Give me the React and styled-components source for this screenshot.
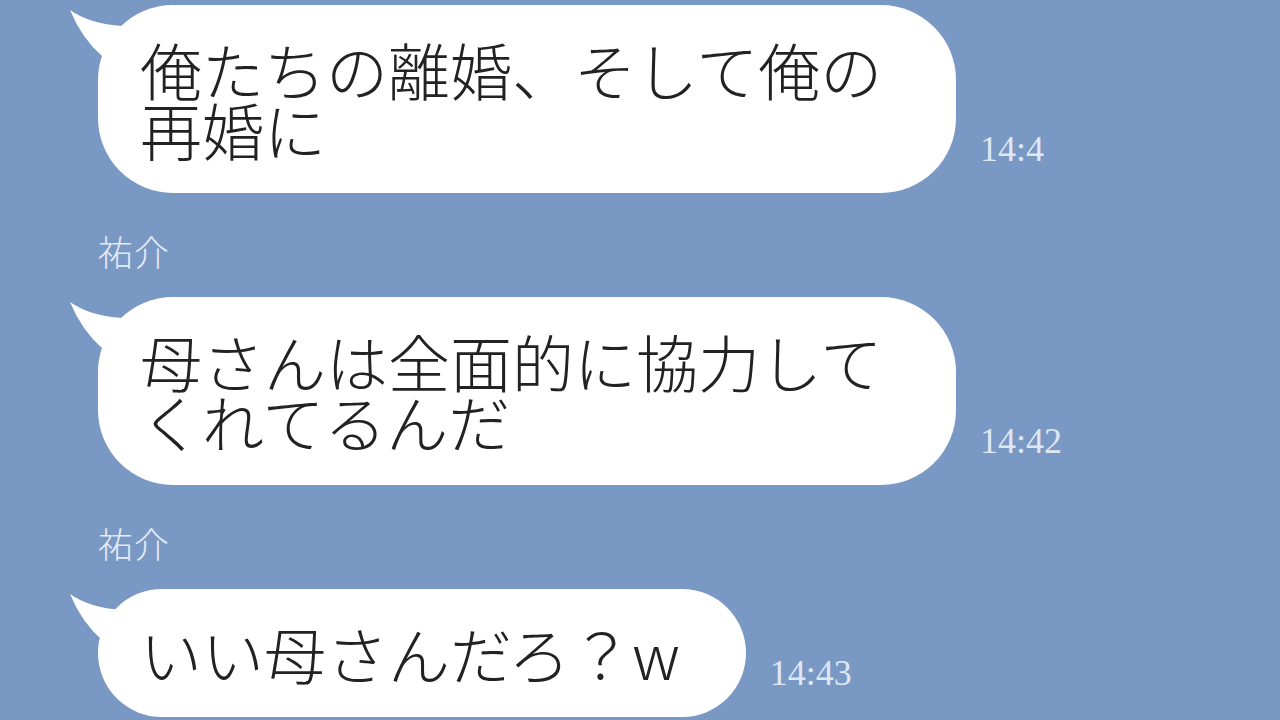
import React from "react";
import styled, { createGlobalStyle } from "styled-components";

const GlobalStyle = createGlobalStyle`
  html, body {
    margin: 0;
    padding: 0;
    background: #7a98c4;
  }
  body {
    width: 1280px;
    height: 720px;
    overflow: hidden;
  }
`;

const Screen = styled.div`
  width: 1280px;
  height: 720px;
  box-sizing: border-box;
  background: #7a98c4;
  padding: 5px 0 0 98px;
  display: flex;
  flex-direction: column;
  gap: 38px;
  overflow: hidden;
`;

const Group = styled.div`
  display: flex;
  flex-direction: column;
  gap: 26px;
`;

const Name = styled.div`
  font-family: "Noto Sans CJK JP", "Noto Sans", sans-serif;
  font-size: 35px;
  font-weight: 300;
  line-height: 40px;
  color: #e4ebf6;
  letter-spacing: 1px;
`;

const Row = styled.div`
  display: flex;
  align-items: flex-end;
  gap: 24px;
`;

const Bubble = styled.div`
  position: relative;
  background: #ffffff;
  border-radius: 75px;
  padding: 34px 66px 34px 42px;
  flex: 0 0 auto;
`;

const BubbleText = styled.div`
  position: relative;
  max-width: 750px;
  font-family: "Noto Sans CJK JP", "Noto Sans", sans-serif;
  font-size: 62px;
  line-height: 60px;
  color: #222222;
  font-weight: 300;
`;

const TailSvg = styled.svg`
  position: absolute;
  left: -30px;
  top: 0;
  width: 90px;
  height: 70px;
  overflow: visible;
`;

const Time = styled.div`
  font-family: "Liberation Serif", "DejaVu Serif", serif;
  font-size: 36px;
  line-height: 36px;
  color: #dfe7f3;
  margin-bottom: 26px;
  white-space: nowrap;
`;

const Tail = () => (
  <TailSvg viewBox="0 0 90 70">
    <path
      d="M2,5 Q22,19 54,21 L88,30 L88,62 L42,62 L35,52 Q14,34 2,5 Z"
      fill="#ffffff"
    />
  </TailSvg>
);

const messages = [
  { name: null, text: "俺たちの離婚、そして俺の再婚に", time: "14:4" },
  { name: "祐介", text: "母さんは全面的に協力してくれてるんだ", time: "14:42" },
  { name: "祐介", text: "いい母さんだろ？w", time: "14:43" },
];

export default function App() {
  return (
    <>
      <GlobalStyle />
      <Screen>
        {messages.map((m, i) => (
          <Group key={i}>
            {m.name && <Name>{m.name}</Name>}
            <Row>
              <Bubble>
                <Tail />
                <BubbleText>{m.text}</BubbleText>
              </Bubble>
              <Time>{m.time}</Time>
            </Row>
          </Group>
        ))}
      </Screen>
    </>
  );
}
